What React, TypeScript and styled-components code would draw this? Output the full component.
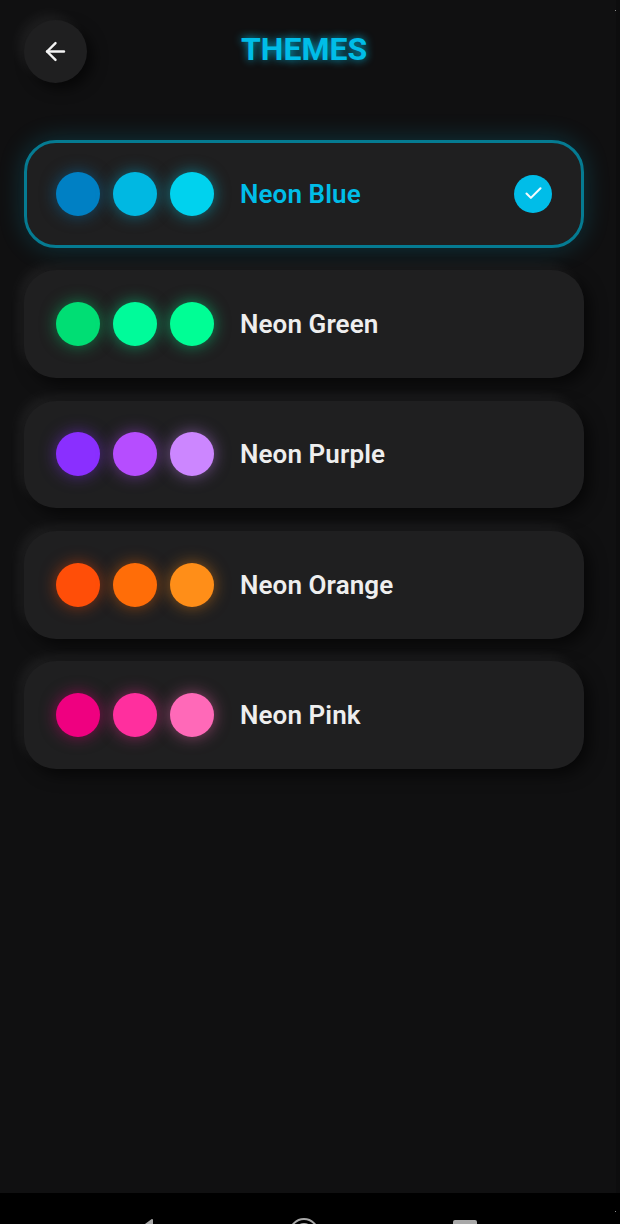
import React from 'react';
import styled, { createGlobalStyle } from 'styled-components';
import { ArrowLeft, Check } from 'lucide-react';

const Global = createGlobalStyle`
  html, body { margin: 0; padding: 0; background: #000; }
  * { box-sizing: border-box; }
`;

const Screen = styled.div`
  width: 620px;
  height: 1224px;
  overflow: hidden;
  position: relative;
  display: flex;
  flex-direction: column;
  background: #000;
  font-family: Roboto, "Liberation Sans", sans-serif;
`;

const Main = styled.main`
  flex: 0 0 1193px;
  background: #101011;
  border-right: 4px solid #0d0d0e;
  padding: 20px 32px 0 24px;
  display: flex;
  flex-direction: column;
`;

const Header = styled.header`
  display: flex;
  align-items: center;
  height: 63px;
`;

const BackButton = styled.button`
  width: 63px;
  height: 63px;
  border: 0;
  padding: 0;
  border-radius: 50%;
  background: #1f1f20;
  color: #f4f4f4;
  display: flex;
  align-items: center;
  justify-content: center;
  box-shadow: 6px 6px 14px rgba(0, 0, 0, 0.6), -6px -6px 12px rgba(255, 255, 255, 0.06);
`;

const Title = styled.h1`
  margin: 0 0 6px 154px;
  color: #00bde8;
  font-size: 32px;
  line-height: 36px;
  font-weight: 700;
  text-shadow: 0 0 8px rgba(0, 190, 232, 0.85);
`;

const List = styled.div`
  margin-top: 57px;
  display: flex;
  flex-direction: column;
  gap: 22.6px;
`;

const Card = styled.div<{ $active?: boolean }>`
  width: 560px;
  height: 107.7px;
  border-radius: 32px;
  background: #1f1f20;
  display: flex;
  align-items: center;
  border: ${(p) => (p.$active ? '3px solid #057b92' : '0')};
  padding-left: ${(p) => (p.$active ? '29px' : '32px')};
  padding-right: ${(p) => (p.$active ? '29px' : '32px')};
  box-shadow: ${(p) =>
    p.$active
      ? '0 0 26px rgba(0, 190, 232, 0.22)'
      : '6px 6px 16px rgba(0, 0, 0, 0.6), -6px -6px 12px rgba(255, 255, 255, 0.06)'};
`;

const Dots = styled.div`
  display: flex;
  gap: 13px;
  margin-right: 26px;
`;

const Dot = styled.span<{ $color: string }>`
  width: 44px;
  height: 44px;
  border-radius: 50%;
  background: ${(p) => p.$color};
  box-shadow: 0 0 16px ${(p) => p.$color}80;
`;

const Name = styled.span<{ $active?: boolean }>`
  flex: 1;
  font-size: 26px;
  font-weight: 600;
  letter-spacing: 0.1px;
  color: ${(p) => (p.$active ? '#00bde8' : '#eeeeee')};
`;

const CheckBadge = styled.span`
  width: 38px;
  height: 38px;
  border-radius: 50%;
  background: #00bde8;
  color: #f4fbfd;
  display: flex;
  align-items: center;
  justify-content: center;
`;

const NavBar = styled.nav`
  flex: 1;
  background: #000;
  display: grid;
  grid-template-columns: 133px 20px 136px 30px 134px 24px;
  overflow: hidden;
`;

const NavIcon = styled.svg`
  display: block;
  margin-top: 25px;
`;

const Speck = styled.i<{ $y: number }>`
  position: absolute;
  left: 615px;
  top: ${(p) => p.$y}px;
  width: 1px;
  height: 1px;
  background: #8a8a8a;
`;

const themes = [
  { name: 'Neon Blue', colors: ['#0080c4', '#00b8e2', '#00d2ee'], active: true },
  { name: 'Neon Green', colors: ['#00de74', '#00fb9a', '#00fe95'] },
  { name: 'Neon Purple', colors: ['#8a2fff', '#b64dff', '#cc86ff'] },
  { name: 'Neon Orange', colors: ['#ff4e08', '#ff6d08', '#ff8e18'] },
  { name: 'Neon Pink', colors: ['#ef0080', '#ff2f9e', '#ff69b8'] },
];

export default function App() {
  return (
    <Screen>
      <Global />
      <Main>
        <Header>
          <BackButton aria-label="Back">
            <ArrowLeft size={29} strokeWidth={2} />
          </BackButton>
          <Title>THEMES</Title>
        </Header>
        <List>
          {themes.map((t) => (
            <Card key={t.name} $active={t.active}>
              <Dots>
                {t.colors.map((c) => (
                  <Dot key={c} $color={c} />
                ))}
              </Dots>
              <Name $active={t.active}>{t.name}</Name>
              {t.active && (
                <CheckBadge>
                  <Check size={21} strokeWidth={2.4} />
                </CheckBadge>
              )}
            </Card>
          ))}
        </List>
      </Main>
      <NavBar>
        <span />
        <NavIcon width="20" height="31" viewBox="0 0 20 31">
          <path d="M19 2 L3 14 L19 26 Z" fill="#a8a8a8" stroke="#a8a8a8" strokeWidth="2" strokeLinejoin="round" />
        </NavIcon>
        <span />
        <NavIcon width="30" height="31" viewBox="0 0 30 31">
          <circle cx="15" cy="15" r="14" fill="none" stroke="#a8a8a8" strokeWidth="2" />
          <circle cx="15" cy="15" r="10" fill="#a8a8a8" />
        </NavIcon>
        <span />
        <NavIcon width="24" height="31" viewBox="0 0 24 31">
          <rect x="0" y="2" width="24" height="24" rx="2" fill="#a8a8a8" />
        </NavIcon>
      </NavBar>
      <Speck $y={10} />
      <Speck $y={1211} />
    </Screen>
  );
}
